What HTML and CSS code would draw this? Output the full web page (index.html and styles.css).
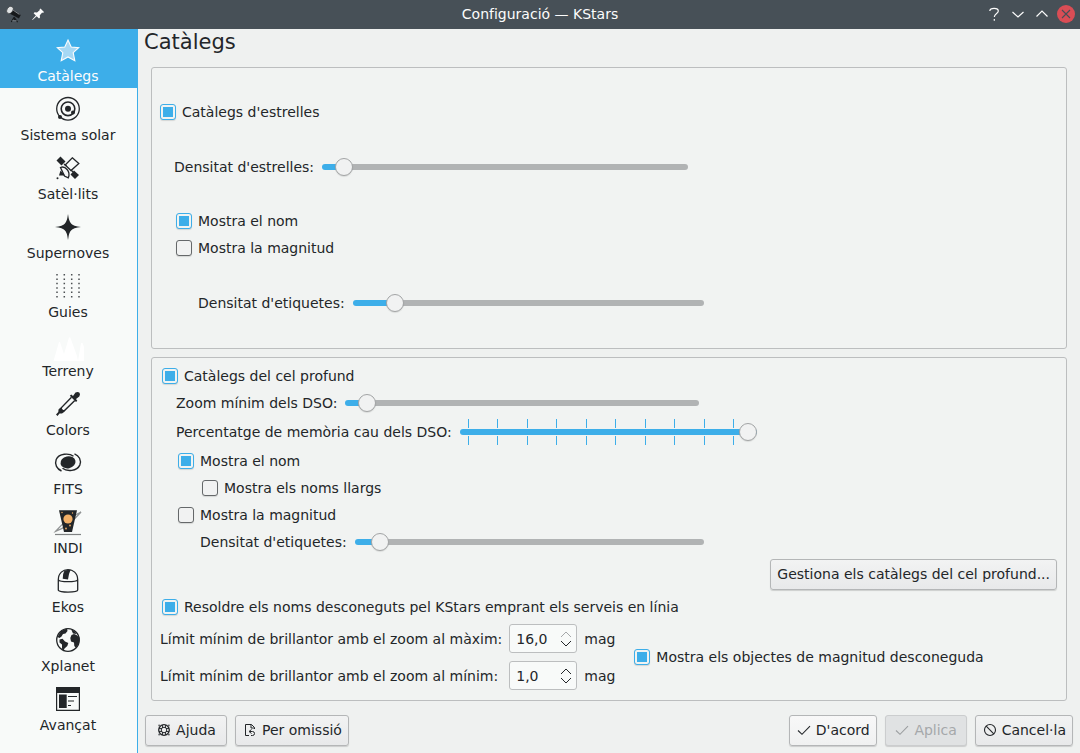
FILE: index.html
```html
<!DOCTYPE html>
<html lang="ca">
<head>
<meta charset="utf-8">
<meta name="viewport" content="width=device-width, initial-scale=1">
<title>Configuració — KStars</title>
<link rel="stylesheet" href="styles.css">
</head>
<body>
<div class="window">
  <header class="titlebar">
    <div class="titlebar-side">
      <svg class="app-icon" viewBox="0 0 20 20" aria-hidden="true">
        <path d="M7 3.500 17.500 11 15.500 15 4 9Z" fill="#16191b"/>
        <path d="M8 5 16 10.500" stroke="#8d9296" stroke-width="1"/>
        <ellipse cx="5.500" cy="5.500" rx="3.200" ry="4.400" transform="rotate(35 5.500 5.500)" fill="#dfe2e3" stroke="#23272a" stroke-width=".6"/>
        <path d="M10 13.500 7 19M10 13.500 14 19M10.500 14v3" stroke="#16191b" stroke-width="1.200" fill="none"/>
        <path d="M8 17.500h5" stroke="#8d9296" stroke-width=".8"/>
      </svg>
      <button class="title-button" type="button" aria-label="Fixa">
        <svg viewBox="0 0 18 18"><path d="M11.500 3.500 15 7 14 8 13.200 7.600 10.800 10.200 11 12.600 10 13.600 7.700 11.300 3.600 15 3.200 14.600 6.900 10.500 4.600 8.200 5.600 7.200 8 7.400 10.900 5 10.500 4.500Z" fill="#fcfcfc"/></svg>
      </button>
    </div>
    <h1 class="window-title">Configuració — KStars</h1>
    <div class="titlebar-side titlebar-end">
      <button class="title-button" type="button" aria-label="Ajuda contextual">
        <svg viewBox="0 0 18 18"><path d="M4.800 6C5 2.500 13.300 2.500 13.300 6 13.300 8.500 9.500 8.500 9.300 12M9.300 14v1.800" fill="none" stroke="#fcfcfc" stroke-width="1.200"/></svg>
      </button>
      <button class="title-button" type="button" aria-label="Minimitza">
        <svg viewBox="0 0 18 18"><path d="M3.500 7 9 12 14.500 7" fill="none" stroke="#fcfcfc" stroke-width="1.200"/></svg>
      </button>
      <button class="title-button" type="button" aria-label="Maximitza">
        <svg viewBox="0 0 18 18"><path d="M3.500 11.500 9 6 14.500 11.500" fill="none" stroke="#fcfcfc" stroke-width="1.200"/></svg>
      </button>
      <button class="title-button" type="button" aria-label="Tanca">
        <svg viewBox="0 0 18 18"><circle cx="9" cy="9" r="9" fill="#da4d55"/><path d="M5 5 13 13M13 5 5 13" stroke="#475057" stroke-width="1.100"/></svg>
      </button>
    </div>
  </header>

  <div class="body">
    <nav class="sidebar" aria-label="Pàgines">
      <button class="page page-current" type="button" aria-current="page">
        <svg class="page-icon" viewBox="0 0 32 32"><path d="M16 6 19.200 13 26.700 13.600 21.200 18.700 22.800 26.800 16 23 9.200 26.800 10.800 18.700 5.300 13.600 12.800 13Z" fill="#a6d8f4" stroke="#fcfcfc" stroke-width="1.100"/></svg>
        <span>Catàlegs</span>
      </button>
      <button class="page" type="button">
        <svg class="page-icon" viewBox="0 0 32 32"><g fill="none" stroke="#232629" stroke-width="1.300"><circle cx="16" cy="15.800" r="11.300"/><circle cx="16" cy="15.800" r="6.800" stroke-width="1.600"/></g><g fill="#232629"><circle cx="16" cy="15.800" r="3"/><circle cx="8" cy="24" r="2"/><circle cx="21" cy="19.500" r="2"/></g></svg>
        <span>Sistema solar</span>
      </button>
      <button class="page" type="button">
        <svg class="page-icon" viewBox="0 0 32 32"><path d="M8.500 4.500 13.500 9.500 9.500 13.500 4.500 8.500ZM22 18.500 27 23 23 27 18.500 22.500Z" fill="#232629"/><path d="M20.300 5.800 26.800 11.600 19 18.500 13.200 13Z" fill="none" stroke="#232629" stroke-width="1.300"/><path d="M8.500 15.500C13 13.500 19 19.500 16.300 25.800L12.500 24Z" fill="#f8f9f9" stroke="#232629" stroke-width="1.300"/><path d="M8.500 18.500 13 23.500H7Z" fill="#232629"/><path d="M12 12 14.500 14M19 18 21 20" stroke="#232629" stroke-width="1.300"/><circle cx="5.500" cy="26.300" r="1" fill="#232629"/></svg>
        <span>Satèl·lits</span>
      </button>
      <button class="page" type="button">
        <svg class="page-icon" viewBox="0 0 32 32"><path d="M16 3Q17 11 19.300 12.700 21 15 29 16 21 17 19.300 19.300 17 21 16 29 15 21 12.700 19.300 11 17 3 16 11 15 12.700 12.700 15 11 16 3Z" fill="#232629"/></svg>
        <span>Supernoves</span>
      </button>
      <button class="page" type="button">
        <svg class="page-icon" viewBox="0 0 32 32"><g fill="none" stroke="#4b4f52" stroke-width="1.500" stroke-dasharray="1.500 2.900"><path d="M5 4v24M12.300 4v24M19.700 4v24M27 4v24"/></g></svg>
        <span>Guies</span>
      </button>
      <button class="page" type="button">
        <svg class="page-icon" viewBox="0 0 32 32"><path d="M1.500 32 7 13 8 13 12 25 17 8.500 18.300 8.500 25 27 26 32ZM26 32 29 14 30.500 14 32 18V32Z" fill="#fff"/></svg>
        <span>Terreny</span>
      </button>
      <button class="page" type="button">
        <svg class="page-icon" viewBox="0 0 32 32"><path d="M19.500 9.200 9.500 19.500 8.500 23.500 12.500 22.500 22.800 12.500" fill="none" stroke="#232629" stroke-width="1.400"/><path d="M8.500 19.500 12.800 23.500 10 25.500 7.500 25.500 5.500 28 4 26.500 6.300 24 6.500 21.500ZM17.800 7.800 19.300 6.500 21 8 23.500 4.500Q26 3.300 27.500 4.800 28.600 6.500 27.300 8.500L24 11 25.300 12.700 24 14Z" fill="#232629"/></svg>
        <span>Colors</span>
      </button>
      <button class="page" type="button">
        <svg class="page-icon" viewBox="0 0 32 32"><ellipse cx="16" cy="15.300" rx="7.600" ry="6" transform="rotate(-12 16 15.300)" fill="#232629"/><g fill="none" stroke="#232629" stroke-width="1.400"><path d="M21.500 9.300C17 5.800 7 6.300 4.200 12.500 2.300 17.500 5 22 9.500 24"/><path d="M10.500 21.300C15 24.800 25 24.300 27.800 18.100 29.700 13.100 27 8.600 22.500 6.800"/></g></svg>
        <span>FITS</span>
      </button>
      <button class="page" type="button">
        <svg class="page-icon" viewBox="0 0 32 32"><path d="M29 6Q14 13 3.500 25.500 16 21 29 6Z" fill="none" stroke="#909394" stroke-width="1.300"/><path d="M7 4.300H25L20 26H12Z" fill="#232629"/><circle cx="16" cy="13" r="4.600" fill="#f3b067"/><g fill="#f3b067"><circle cx="10" cy="6.500" r=".7"/><circle cx="20.500" cy="7" r=".7"/><circle cx="18" cy="19.500" r=".9"/><circle cx="14" cy="22.500" r=".9"/></g><path d="M3 28.500H29" stroke="#7f8283" stroke-width="1.200"/></svg>
        <span>INDI</span>
      </button>
      <button class="page" type="button">
        <svg class="page-icon" viewBox="0 0 32 32"><path d="M6.300 14.800C6.300 1.200 25.700 1.200 25.700 14.800V25C25.700 27.700 6.300 27.700 6.300 25ZM6.300 14.800C8 17.200 24 17.200 25.700 14.800" fill="none" stroke="#232629" stroke-width="1.300"/><path d="M12.500 5.500 18.700 4.500Q16.500 9 16 14.500L10.700 13.800Q10.500 9 12.500 5.500Z" fill="#232629"/></svg>
        <span>Ekos</span>
      </button>
      <button class="page" type="button">
        <svg class="page-icon" viewBox="0 0 32 32"><circle cx="16" cy="16" r="11.300" fill="none" stroke="#232629" stroke-width="1.300"/><path d="M9 7 15 4.500 15.500 7 13.500 9.500 11 10 9.500 12.500 7.500 14 5.500 13ZM7.500 15.500 10.500 14.800 13 17.500 16.300 19 15.300 22 12.500 24.500 11.500 26.500 10 24.500 10 20.500 7.500 18.500ZM19.500 11 22 10 24.500 11 27.300 13.500 27 19 24 24 22.300 22 22 18.500 19 17.500 18.300 14ZM19 5 23 7.500 24.500 10 21 9.500Z" fill="#232629"/></svg>
        <span>Xplanet</span>
      </button>
      <button class="page" type="button">
        <svg class="page-icon" viewBox="0 0 32 32"><path d="M4 4H28V28H4ZM5.200 10V26.800H26.800V10Z" fill="#232629" fill-rule="evenodd"/><path d="M7 11.500H14.700V25H7Z" fill="#232629"/><path d="M16 13.500H25M16 18H22M16 22.500H19" stroke="#232629" stroke-width="1.200"/></svg>
        <span>Avançat</span>
      </button>
    </nav>

    <main class="content">
      <h2 class="page-title">Catàlegs</h2>

      <section class="group group-stars">
        <label class="check"><input type="checkbox" checked>Catàlegs d'estrelles</label>
        <div class="row indent-1 stars-density">
          <label for="star-density">Densitat d'estrelles:</label>
          <input class="slider slider-long" id="star-density" type="range" min="0" max="100" step="any" value="3.7" style="--value: 3.7%">
        </div>
        <div class="stack">
          <label class="check"><input type="checkbox" checked>Mostra el nom</label>
          <label class="check"><input type="checkbox">Mostra la magnitud</label>
        </div>
        <div class="row indent-3">
          <label for="star-labels">Densitat d'etiquetes:</label>
          <input class="slider" id="star-labels" type="range" min="0" max="100" step="any" value="9.9" style="--value: 9.9%">
        </div>
      </section>

      <section class="group group-deep">
        <div class="deep-options">
          <label class="check"><input type="checkbox" checked>Catàlegs del cel profund</label>
          <div class="row indent-1">
            <label for="dso-zoom">Zoom mínim dels DSO:</label>
            <input class="slider slider-zoom" id="dso-zoom" type="range" min="0" max="100" step="any" value="3.8" style="--value: 3.8%">
          </div>
          <div class="row row-ticks indent-1">
            <label for="dso-cache">Percentatge de memòria cau dels DSO:</label>
            <input class="slider slider-ticks" id="dso-cache" type="range" min="0" max="100" value="100" style="--value: 100%">
          </div>
          <label class="check indent-2"><input type="checkbox" checked>Mostra el nom</label>
          <label class="check indent-4"><input type="checkbox">Mostra els noms llargs</label>
          <label class="check indent-2"><input type="checkbox">Mostra la magnitud</label>
          <div class="row indent-3">
            <label for="dso-labels">Densitat d'etiquetes:</label>
            <input class="slider slider-short" id="dso-labels" type="range" min="0" max="100" step="any" value="4.8" style="--value: 4.8%">
          </div>
        </div>
        <button class="button manage" type="button">Gestiona els catàlegs del cel profund...</button>
        <label class="check resolve"><input type="checkbox" checked>Resoldre els noms desconeguts pel KStars emprant els serveis en línia</label>
        <div class="limits">
          <div class="limit-grid">
            <label for="limit-max">Límit mínim de brillantor amb el zoom al màxim:</label>
            <div class="spin">
              <input id="limit-max" type="text" inputmode="decimal" value="16,0">
              <div class="spin-arrows">
                <button type="button" aria-label="Augmenta" disabled><svg viewBox="0 0 12 8"><path d="M1 7 6 2 11 7"/></svg></button>
                <button type="button" aria-label="Disminueix"><svg viewBox="0 0 12 8"><path d="M1 1 6 6 11 1"/></svg></button>
              </div>
            </div>
            <span>mag</span>
            <label for="limit-min">Límit mínim de brillantor amb el zoom al mínim:</label>
            <div class="spin">
              <input id="limit-min" type="text" inputmode="decimal" value="1,0">
              <div class="spin-arrows">
                <button type="button" aria-label="Augmenta"><svg viewBox="0 0 12 8"><path d="M1 7 6 2 11 7"/></svg></button>
                <button type="button" aria-label="Disminueix"><svg viewBox="0 0 12 8"><path d="M1 1 6 6 11 1"/></svg></button>
              </div>
            </div>
            <span>mag</span>
          </div>
          <label class="check"><input type="checkbox" checked>Mostra els objectes de magnitud desconeguda</label>
        </div>
      </section>

      <footer class="actions">
        <button class="button" type="button">
          <svg viewBox="0 0 16 16"><g fill="none" stroke="#232629"><circle cx="8" cy="8" r="5.300" stroke-width="1.300"/><circle cx="8" cy="8" r="2.800"/><path d="M6.500 3v3M9.500 3v3M6.500 10v3M9.500 10v3M3 6.500h3M3 9.500h3M10 6.500h3M10 9.500h3" stroke-width=".9"/></g><path d="M2.300 2.800h2L2.800 4.500ZM13.700 2.800h-2L13.200 4.500ZM2.300 13.200h2L2.800 11.500ZM13.700 13.200h-2L13.200 11.500Z" fill="#232629"/></svg>
          Ajuda
        </button>
        <button class="button" type="button">
          <svg viewBox="0 0 16 16"><path d="M7 13.500H3.500V2.500H9.500L12.500 5.500V7M9 2.500V6H12.500" fill="none" stroke="#232629"/><path d="M9.500 7.500 7 9.500 9.500 11.500M7.500 9.500H10.500Q12.500 9.500 12.500 11.500T10.500 13.500H9" fill="none" stroke="#232629"/></svg>
          Per omissió
        </button>
        <span class="actions-space"></span>
        <button class="button button-default" type="button">
          <svg viewBox="0 0 16 16"><path d="M2 8.500 6 12.300 14 4.200" fill="none" stroke="#232629" stroke-width="1.100"/></svg>
          D'acord
        </button>
        <button class="button" type="button" disabled>
          <svg viewBox="0 0 16 16"><path d="M2 8.500 6 12.300 14 4.200" fill="none" stroke="#9b9ea0" stroke-width="1.100"/></svg>
          Aplica
        </button>
        <button class="button" type="button">
          <svg viewBox="0 0 16 16"><g fill="none" stroke="#232629" stroke-width="1.100"><circle cx="8" cy="8" r="5.500"/><path d="M4.200 4.200 11.800 11.800"/></g></svg>
          Cancel·la
        </button>
      </footer>
    </main>
  </div>
</div>
</body>
</html>
```
FILE: styles.css
```css
:root {
  --text: #232629;
  --accent: #3daee9;
  --bg: #eff1f0;
  --group: #f1f3f2;
  --line: #bcbebf;
}

* { box-sizing: border-box; }

body {
  margin: 0;
  background: var(--bg);
  color: var(--text);
  font: 14px/20px "DejaVu Sans", sans-serif;
}

button, input {
  font: inherit;
  color: inherit;
}

svg { display: block; }

.window {
  min-height: 100vh;
  display: flex;
  flex-direction: column;
}

/* Title bar */
.titlebar {
  display: grid;
  grid-template-columns: 1fr auto 1fr;
  align-items: center;
  height: 29px;
  padding: 0 5px 1px;
  background: #475057;
  color: #fcfcfc;
}

.titlebar-side {
  display: flex;
  align-items: center;
  gap: 6px;
}

.titlebar-end { justify-content: flex-end; }

.window-title {
  margin: 0;
  font-size: 14px;
  font-weight: 400;
}

.app-icon {
  width: 18px;
  height: 20px;
}

.title-button {
  width: 18px;
  height: 18px;
  padding: 0;
  border: 0;
  background: none;
}

/* Sidebar */
.body {
  flex: 1;
  display: flex;
}

.sidebar {
  flex: none;
  width: 138px;
  border-right: 1px solid var(--accent);
  background: #f8faf9;
}

.page {
  display: flex;
  flex-direction: column;
  align-items: center;
  width: 100%;
  height: 59px;
  padding: 5px 1px 2px 0;
  border: 0;
  background: none;
}

.page-current {
  background: var(--accent);
  color: #fcfcfc;
}

.page-icon {
  width: 32px;
  height: 32px;
}

/* Content */
.content {
  flex: 1;
  min-width: 0;
  display: flex;
  flex-direction: column;
}

.page-title {
  margin: 0;
  padding: 0 6px;
  font-size: 21px;
  line-height: 26px;
  font-weight: 400;
}

.group {
  margin: 0 13px 8px;
  border: 1px solid var(--line);
  border-radius: 3px;
  background: var(--group);
}

.group-stars {
  display: flex;
  flex-direction: column;
  margin-top: 12px;
  padding: 30px 8px 32px;
}

.group-stars .stack {
  margin: 27px 0 28px 16px;
}

.group-deep {
  flex: 1;
  display: flex;
  flex-direction: column;
  margin-bottom: 0;
  padding: 4px 9px 9px 8px;
}

.stack, .deep-options {
  display: flex;
  flex-direction: column;
}

.row, .check {
  display: flex;
  align-items: center;
  height: 27px;
}

.row { gap: 8px; }

.check {
  align-self: flex-start;
  gap: 6px;
}

.row-ticks { height: 31px; }
.stars-density { margin-top: 28px; }
.deep-options, .resolve { padding-left: 2px; }
.indent-1 { margin-left: 14px; }
.indent-2 { margin-left: 16px; }
.indent-3 { margin-left: 38px; }
.indent-4 { margin-left: 40px; }

.check input {
  appearance: none;
  width: 16px;
  height: 16px;
  margin: 0;
  border: 1px solid #65686a;
  border-radius: 3px;
  background: #f1f2f2;
  box-shadow: 0 1px 1px rgba(0, 0, 0, .12);
}

.check input:checked {
  padding: 2px;
  border-color: var(--accent);
  background: var(--accent) content-box;
}

/* Sliders */
.slider {
  appearance: none;
  flex: 0 1 351px;
  min-width: 0;
  height: 18px;
  margin: 0;
  background: none;
}

.slider-long { flex-basis: 366px; }
.slider-zoom { flex-basis: 354px; }
.slider-short { flex-basis: 349px; }

.slider::-webkit-slider-runnable-track {
  height: 6px;
  border-radius: 3px;
  background: linear-gradient(to right, var(--accent) calc(var(--value) + 6px), #b1b3b4 0);
}

.slider::-webkit-slider-thumb {
  appearance: none;
  width: 18px;
  height: 18px;
  margin-top: -6px;
  border: 1px solid #a2a4a5;
  border-radius: 50%;
  background: #f1f2f2;
  box-shadow: 0 1px 1px rgba(0, 0, 0, .1);
}

.slider-ticks {
  --tick: linear-gradient(to right, var(--accent) 1px, transparent 1px 29px, var(--accent) 29px 30px, transparent 30px);
  flex-basis: 297px;
  height: 26px;
  background:
    var(--tick) 8px 0 / 59px 9px repeat-x,
    var(--tick) 8px 100% / 59px 9px repeat-x;
}

/* Buttons */
.button {
  display: flex;
  align-items: center;
  justify-content: center;
  gap: 4px;
  min-width: 82px;
  height: 31px;
  padding: 0 6px 2px;
  border: 1px solid #b4b6b7;
  border-radius: 3px;
  background: linear-gradient(#f2f3f3, #e8e9ea);
  box-shadow: 0 1px 1px rgba(0, 0, 0, .15);
  white-space: nowrap;
}

.button svg {
  width: 16px;
  height: 16px;
}

.button-default { background: linear-gradient(#f8f8f8, #f0f1f1); }

.button:disabled {
  border-color: #cbcdce;
  background: #e0e2e3;
  color: #a5a8aa;
}

.manage {
  align-self: flex-end;
  margin: 4px 0 3px;
}

/* Magnitude limits */
.limits {
  display: flex;
  align-items: center;
  gap: 19px;
  margin-top: 4px;
}

.limits .check { align-self: center; }

.limit-grid {
  display: grid;
  grid-template-columns: auto 68px auto;
  align-items: center;
  gap: 8px 7px;
}

.spin {
  display: flex;
  height: 29px;
  border: 1px solid var(--line);
  border-radius: 3px;
  background: #f8faf9;
}

.spin input {
  flex: 1;
  min-width: 0;
  padding: 0 0 0 6px;
  border: 0;
  background: none;
}

.spin-arrows {
  display: flex;
  flex-direction: column;
  justify-content: center;
  gap: 2px;
  padding-right: 4px;
}

.spin-arrows button {
  width: 12px;
  height: 8px;
  padding: 0;
  border: 0;
  background: none;
}

.spin-arrows path {
  fill: none;
  stroke: var(--text);
}

.spin-arrows button:disabled path { stroke: #a5a8aa; }

.actions {
  display: flex;
  gap: 8px;
  padding: 14px 7px 7px;
}

.actions-space { flex: 1; }
```
